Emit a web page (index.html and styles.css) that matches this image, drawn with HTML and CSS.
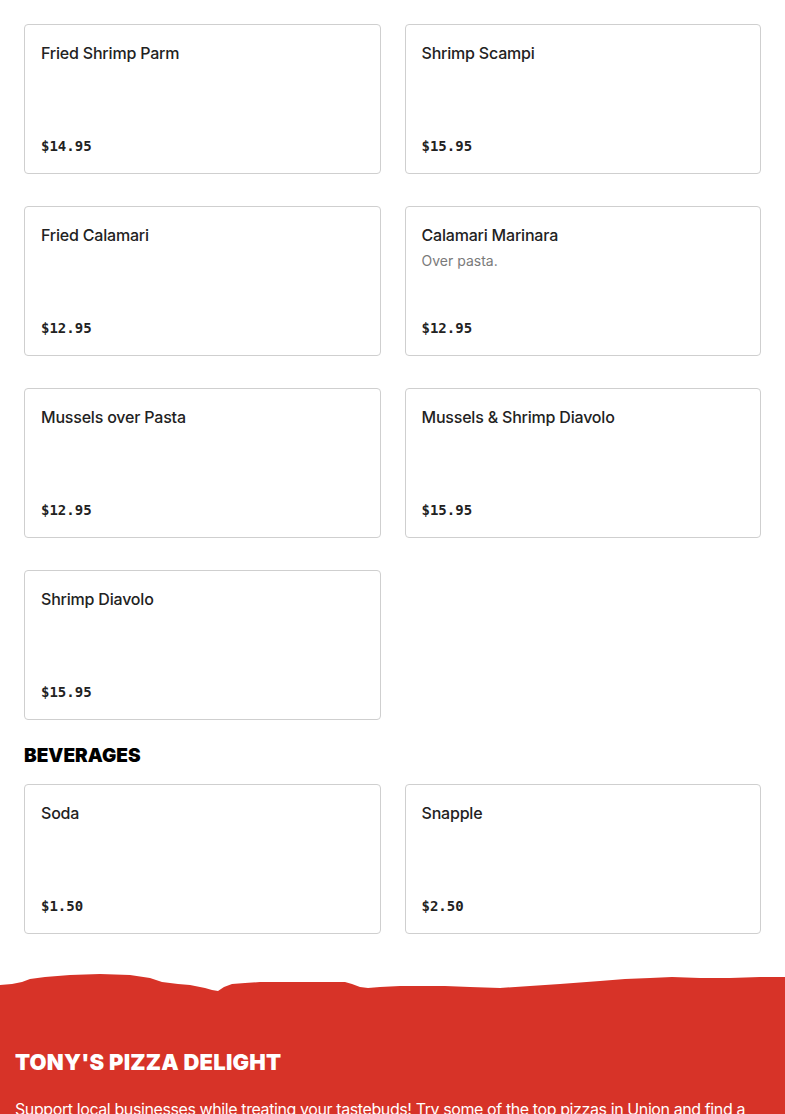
FILE: index.html
```html
<!DOCTYPE html>
<html lang="en">
<head>
<meta charset="utf-8">
<title>Tony's Pizza Delight - Menu</title>
<link rel="stylesheet" href="styles.css">
</head>
<body>
<main class="menu">
  <section class="section">
    <div class="grid">
      <div class="card"><div class="card-top"><div class="item-name">Fried Shrimp Parm</div></div><div class="price">$14.95</div></div>
      <div class="card"><div class="card-top"><div class="item-name">Shrimp Scampi</div></div><div class="price">$15.95</div></div>
      <div class="card"><div class="card-top"><div class="item-name">Fried Calamari</div></div><div class="price">$12.95</div></div>
      <div class="card"><div class="card-top"><div class="item-name">Calamari Marinara</div><div class="item-desc">Over pasta.</div></div><div class="price">$12.95</div></div>
      <div class="card"><div class="card-top"><div class="item-name">Mussels over Pasta</div></div><div class="price">$12.95</div></div>
      <div class="card"><div class="card-top"><div class="item-name">Mussels &amp; Shrimp Diavolo</div></div><div class="price">$15.95</div></div>
      <div class="card"><div class="card-top"><div class="item-name">Shrimp Diavolo</div></div><div class="price">$15.95</div></div>
    </div>
  </section>
  <section class="section">
    <h2 class="section-title">BEVERAGES</h2>
    <div class="grid">
      <div class="card"><div class="card-top"><div class="item-name">Soda</div></div><div class="price">$1.50</div></div>
      <div class="card"><div class="card-top"><div class="item-name">Snapple</div></div><div class="price">$2.50</div></div>
    </div>
  </section>
</main>
<footer class="footer">
  <svg class="torn" viewBox="0 0 785 24" preserveAspectRatio="none" aria-hidden="true">
    <path d="M0 13 L12 12 L22 10 L30 7 L45 5 L70 3 L100 2 L130 3 L150 6 L162 10 L178 12 L190 13 L205 16 L212 18 L218 19 L224 15 L232 12 L245 11 L260 10 L290 10 L320 10 L345 10 L352 12 L360 15 L368 16 L380 15 L400 14 L420 14 L445 14 L470 15 L500 16 L530 14 L560 12 L600 9 L625 7 L650 6 L672 5 L700 6 L730 6 L760 5 L785 5 L785 24 L0 24 Z" fill="#d73328"/>
  </svg>
  <div class="footer-body">
    <h2 class="footer-title">TONY'S PIZZA DELIGHT</h2>
    <p class="footer-text">Support local businesses while treating your tastebuds! Try some of the top pizzas in Union and find a new favorite spot for your next meal. Order online for pickup or delivery.</p>
  </div>
</footer>
</body>
</html>
```

FILE: styles.css
```css
* { box-sizing: border-box; }

body {
  margin: 0;
  background: #ffffff;
  font-family: Inter, "Noto Sans", "Liberation Sans", sans-serif;
  color: #222222;
}

.menu {
  padding: 24px 24px 38px;
  display: flex;
  flex-direction: column;
  gap: 24px;
}

.section-title {
  margin: 0 0 16px;
  font-size: 19px;
  line-height: 24px;
  font-weight: 900;
  color: #000000;
}

.grid {
  display: grid;
  grid-template-columns: 1fr 1fr;
  column-gap: 24px;
  row-gap: 32px;
}

.card {
  height: 150px;
  border: 1px solid #cfcfcf;
  border-radius: 4px;
  padding: 16px;
  display: flex;
  flex-direction: column;
  justify-content: space-between;
  background: #ffffff;
}

.item-name {
  font-size: 16px;
  line-height: 24px;
  font-weight: 500;
  letter-spacing: -0.2px;
  color: #222222;
}

.item-desc {
  margin-top: 4px;
  font-size: 14px;
  line-height: 20px;
  color: #7a7a7a;
}

.price {
  font-family: "DejaVu Sans Mono", "Liberation Mono", monospace;
  font-size: 14px;
  line-height: 19px;
  margin-bottom: 1px;
  font-weight: 700;
  color: #222222;
}

.footer {
  display: flex;
  flex-direction: column;
}

.torn {
  display: block;
  width: 100%;
  height: 24px;
  margin-bottom: -1px;
}

.footer-body {
  background: #d73328;
  padding: 53px 15px 40px;
  color: #ffffff;
}

.footer-title {
  margin: 0 0 21px;
  font-size: 22px;
  line-height: 28px;
  font-weight: 900;
  letter-spacing: 0.2px;
  color: #ffffff;
}

.footer-text {
  margin: 0;
  font-size: 16px;
  line-height: 24px;
  letter-spacing: -0.4px;
  color: #ffffff;
}
```
